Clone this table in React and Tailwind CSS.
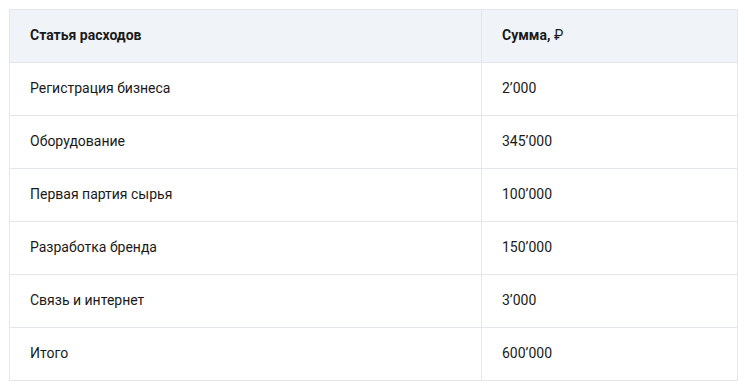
const rows = [
  ['Регистрация бизнеса', '2’000'],
  ['Оборудование', '345’000'],
  ['Первая партия сырья', '100’000'],
  ['Разработка бренда', '150’000'],
  ['Связь и интернет', '3’000'],
  ['Итого', '600’000'],
]

export default function App() {
  return (
    <div className="min-h-screen bg-white pl-[9px] pt-[9px] font-['Roboto',sans-serif] text-[14px] text-[#1a1a1a]">
      <table className="w-[729px] border-collapse border border-[#e3e6ea]">
        <thead>
          <tr className="h-[53px] bg-[#f0f4f8]">
            <th className="w-[472px] border border-[#e3e6ea] pl-[20px] pb-[1px] text-left font-bold">Статья расходов</th>
            <th className="border border-[#e3e6ea] pl-[20px] pb-[1px] text-left font-bold">
              Сумма, <span className="font-normal">₽</span>
            </th>
          </tr>
        </thead>
        <tbody>
          {rows.map(([name, sum]) => (
            <tr key={name} className="h-[53px]">
              <td className="border border-[#e3e6ea] pl-[20px] pb-[1px]">{name}</td>
              <td className="border border-[#e3e6ea] pl-[20px] pb-[1px]">{sum}</td>
            </tr>
          ))}
        </tbody>
      </table>
    </div>
  )
}
